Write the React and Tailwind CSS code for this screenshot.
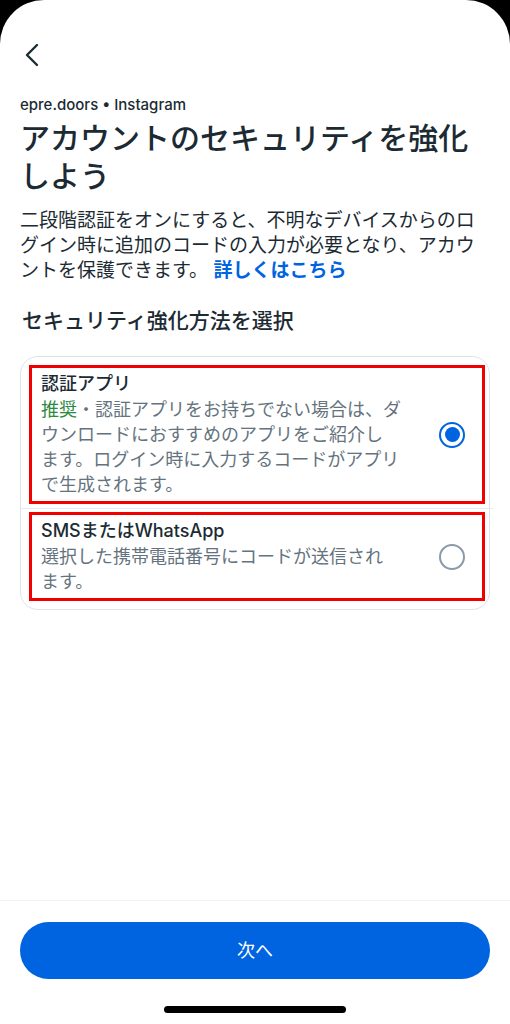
import React from 'react';

const font = { fontFamily: 'Inter, "Noto Sans CJK JP", sans-serif' };

const Radio = ({ checked }) =>
  checked ? (
    <div className="w-[26px] h-[26px] rounded-full border-[2.5px] border-[#0064e0] flex items-center justify-center shrink-0">
      <div className="w-[15px] h-[15px] rounded-full bg-[#0064e0]" />
    </div>
  ) : (
    <div className="w-[26px] h-[26px] rounded-full border-2 border-[#8a9aa8] shrink-0" />
  );

export default function App() {
  return (
    <div className="w-[510px] h-[1024px] bg-black" style={font}>
      <div className="w-full h-full bg-white rounded-t-[44px] flex flex-col text-[#1c2b33]">
        {/* back */}
        <div className="h-[100px] pl-[23px] pt-[42px]">
          <svg width="18" height="26" viewBox="0 0 18 26" fill="none">
            <path d="M14 3 L4 13 L14 23" stroke="#1c2b33" strokeWidth="2.4" strokeLinecap="round" strokeLinejoin="round" />
          </svg>
        </div>

        <div className="px-[20px]">
          <p className="text-[15px] leading-[18px] font-medium -mt-[4px]">epre.doors • Instagram</p>
          <h1 className="text-[30px] leading-[38px] font-medium mt-[5px]">
            アカウントのセキュリティを強化しよう
          </h1>
          <p className="text-[19px] leading-[25px] mt-[13px] text-[#1c2b33]">
            二段階認証をオンにすると、不明なデバイスからのログイン時に追加のコードの入力が必要となり、アカウントを保護できます。{' '}
            <span className="text-[#0064e0] font-semibold">詳しくはこちら</span>
          </p>
          <h2 className="text-[21px] leading-[28px] font-medium mt-[24px] ml-[2px]">セキュリティ強化方法を選択</h2>

          <div className="mt-[21px] border border-[#dee3e9] rounded-[18px] p-[8px] pr-[4px]">
            <div className="border-[3px] border-[#f00000] flex items-center pl-[9px] pr-[17px] py-[4px]">
              <div className="flex-1">
                <p className="text-[18px] leading-[24px] font-medium">認証アプリ</p>
                <p className="text-[18px] leading-[25px] text-[#65737e] mt-[1px]">
                  <span className="text-[#2c8a3f]">推奨</span>・認証アプリをお持ちでない場合は、ダ<br />
                  ウンロードにおすすめのアプリをご紹介し<br />
                  ます。ログイン時に入力するコードがアプリ<br />
                  で生成されます。
                </p>
              </div>
              <Radio checked />
            </div>
            <div className="h-px bg-[#e6e9ec] -mx-[8px] mt-[4px] mb-[3px]" />
            <div className="border-[3px] border-[#f00000] flex items-center pl-[9px] pr-[17px] py-[4px]">
              <div className="flex-1">
                <p className="text-[18px] leading-[24px] font-medium">SMSまたはWhatsApp</p>
                <p className="text-[18px] leading-[25px] text-[#65737e] mt-[1px]">
                  選択した携帯電話番号にコードが送信され<br />
                  ます。
                </p>
              </div>
              <Radio />
            </div>
          </div>
        </div>

        <div className="flex-1" />
        <div className="border-t border-[#f0f2f4] px-[20px] pt-[21px]">
          <button className="w-full h-[57px] rounded-full bg-[#0064e0] text-white text-[18px]">次へ</button>
        </div>
        <div className="flex justify-center pt-[27px] pb-[11px]">
          <div className="w-[182px] h-[7px] rounded-full bg-black" />
        </div>
      </div>
    </div>
  );
}
